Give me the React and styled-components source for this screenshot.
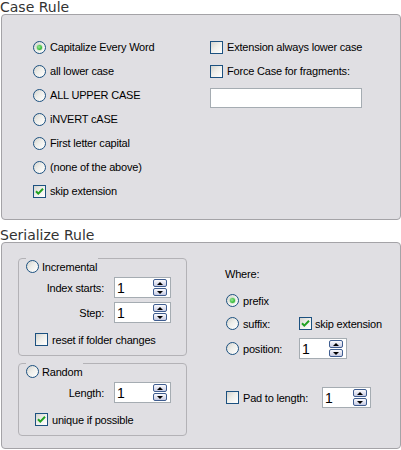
import React from "react";
import styled, { createGlobalStyle, css } from "styled-components";

const PANEL_BG = "#e0dfe3";

const GlobalStyle = createGlobalStyle`
  html, body { margin: 0; padding: 0; background: #fff; }
  body {
    font-family: "Liberation Sans", Arial, sans-serif;
    font-size: 11px;
    color: #000;
    letter-spacing: -0.2px;
  }
`;

const Page = styled.div`
  width: 401px;
`;

const SectionTitle = styled.div`
  font-family: "DejaVu Sans", Verdana, sans-serif;
  font-size: 14px;
  line-height: 14px;
  height: 14px;
  color: #333;
  letter-spacing: 0;
  margin-top: ${(p) => p.$gap || 0}px;
`;

const Panel = styled.div`
  box-sizing: border-box;
  margin-left: 1px;
  width: 400px;
  height: ${(p) => p.$h}px;
  background: ${PANEL_BG};
  border: 1px solid #a4a3a7;
  border-radius: 4px;
  padding: ${(p) => p.$pad};
`;

const CaseGrid = styled.div`
  display: grid;
  grid-template-columns: 177px 1fr;
`;

const Column = styled.div`
  display: flex;
  flex-direction: column;
`;

const OptionRow = styled.label`
  display: flex;
  align-items: center;
  gap: ${(p) => p.$gap ?? 4}px;
  height: ${(p) => p.$h || 24}px;
  margin-left: ${(p) => p.$indent || 0}px;
  white-space: nowrap;
`;

const markBase = css`
  box-sizing: border-box;
  flex: none;
  width: 13px;
  height: 13px;
  border: 1px solid #1c5180;
  background: linear-gradient(135deg, #d4d3ce 0%, #eeeeea 45%, #ffffff 100%);
  display: flex;
  align-items: center;
  justify-content: center;
`;

const Radio = styled.span`
  ${markBase}
  border-radius: 50%;
  &::after {
    content: "";
    display: ${(p) => (p.$checked ? "block" : "none")};
    width: 5px;
    height: 5px;
    border-radius: 50%;
    background: radial-gradient(circle at 40% 40%, #9ae89a 0%, #3fbf3f 55%, #21a121 100%);
    box-shadow: 0 0 1px 0.5px rgba(60, 190, 60, 0.45);
  }
`;

const Box = styled.span`
  ${markBase}
  border-radius: 0;
`;

const Check = ({ checked }) => (
  <Box>
    {checked && (
      <svg width="11" height="11" viewBox="0 0 11 11">
        <path d="M2 5.2 L4.3 7.6 L9 2.8" fill="none" stroke="#21a121" strokeWidth="2" />
      </svg>
    )}
  </Box>
);

const TextBox = styled.div`
  box-sizing: border-box;
  width: 152px;
  height: 20px;
  margin-top: 5px;
  background: #fff;
  border: 1px solid #a5acb2;
`;

const SpinBox = styled.div`
  box-sizing: border-box;
  width: ${(p) => p.$w}px;
  height: 21px;
  background: #fff;
  border: 1px solid #a5acb2;
  display: flex;
  align-items: center;
  justify-content: space-between;
  padding: 0 3px 0 2px;
  font-size: 14px;
  letter-spacing: 0;
`;

const SpinButtons = styled.div`
  display: flex;
  flex-direction: column;
  gap: 1px;
`;

const SpinArrow = styled.span`
  box-sizing: border-box;
  width: 14px;
  height: 8px;
  border: 1px solid #3f5d90;
  border-radius: 2px;
  background: linear-gradient(#fbfbfe, #c7cbe3);
  display: flex;
  align-items: center;
  justify-content: center;
  &::after {
    content: "";
    width: 0;
    height: 0;
    border-left: 3px solid transparent;
    border-right: 3px solid transparent;
    ${(p) =>
      p.$dir === "up"
        ? "border-bottom: 3px solid #000;"
        : "border-top: 3px solid #000;"}
  }
`;

const Spin = ({ w, value = "1" }) => (
  <SpinBox $w={w}>
    <span>{value}</span>
    <SpinButtons>
      <SpinArrow $dir="up" />
      <SpinArrow $dir="down" />
    </SpinButtons>
  </SpinBox>
);

const SerialGrid = styled.div`
  display: grid;
  grid-template-columns: 169px 1fr;
  column-gap: 38px;
`;

const Groups = styled.div`
  display: flex;
  flex-direction: column;
  gap: 7px;
`;

const GroupBox = styled.div`
  position: relative;
  box-sizing: border-box;
  border: 1px solid #b3b2b6;
  border-radius: 4px;
  padding: 18px 0 9px 0;
`;

const GroupLegend = styled.label`
  position: absolute;
  top: -1px;
  left: 7px;
  height: 17px;
  display: flex;
  align-items: center;
  gap: 3px;
  padding-right: 1px;
  background: ${PANEL_BG};
  white-space: nowrap;
`;

const FieldGrid = styled.div`
  display: grid;
  grid-template-columns: 85px 57px;
  column-gap: 10px;
  row-gap: 4px;
  align-items: center;
`;

const FieldLabel = styled.span`
  text-align: right;
  white-space: nowrap;
`;

const GroupCheck = styled.label`
  display: flex;
  align-items: center;
  gap: 4px;
  height: 13px;
  margin: 10px 0 0 16px;
  white-space: nowrap;
`;

const WhereColumn = styled.div`
  padding-top: 9px;
`;

const WhereLabel = styled.div`
  height: 14px;
  line-height: 14px;
`;

const WhereGrid = styled.div`
  display: grid;
  grid-template-columns: 74px auto;
  grid-template-rows: 17px 17px 21px;
  row-gap: 6px;
  margin-top: 11px;
  align-items: center;
`;

const PadRow = styled.div`
  display: grid;
  grid-template-columns: 97px 49px;
  align-items: center;
  height: 21px;
  margin-top: 28px;
`;

const Empty = styled.span``;

export default function App() {
  const caseOptions = [
    ["Capitalize Every Word", true],
    ["all lower case", false],
    ["ALL UPPER CASE", false],
    ["iNVERT cASE", false],
    ["First letter capital", false],
    ["(none of the above)", false],
  ];
  return (
    <Page>
      <GlobalStyle />
      <SectionTitle>Case Rule</SectionTitle>
      <Panel $h={206} $pad="20px 0 0 31px">
        <CaseGrid>
          <Column>
            {caseOptions.map(([label, checked]) => (
              <OptionRow key={label}>
                <Radio $checked={checked} />
                {label}
              </OptionRow>
            ))}
            <OptionRow>
              <Check checked />
              skip extension
            </OptionRow>
          </Column>
          <Column>
            <OptionRow $gap={4}>
              <Check />
              Extension always lower case
            </OptionRow>
            <OptionRow $gap={4}>
              <Check />
              Force Case for fragments:
            </OptionRow>
            <TextBox />
          </Column>
        </CaseGrid>
      </Panel>

      <SectionTitle $gap={8}>Serialize Rule</SectionTitle>
      <Panel $h={207} $pad="15px 0 0 16px">
        <SerialGrid>
          <Groups>
            <GroupBox>
              <GroupLegend>
                <Radio />
                Incremental
              </GroupLegend>
              <FieldGrid>
                <FieldLabel>Index starts:</FieldLabel>
                <Spin w={57} />
                <FieldLabel>Step:</FieldLabel>
                <Spin w={57} />
              </FieldGrid>
              <GroupCheck>
                <Check />
                reset if folder changes
              </GroupCheck>
            </GroupBox>
            <GroupBox>
              <GroupLegend>
                <Radio />
                Random
              </GroupLegend>
              <FieldGrid>
                <FieldLabel>Length:</FieldLabel>
                <Spin w={57} />
              </FieldGrid>
              <GroupCheck>
                <Check checked />
                unique if possible
              </GroupCheck>
            </GroupBox>
          </Groups>

          <WhereColumn>
            <WhereLabel>Where:</WhereLabel>
            <WhereGrid>
              <OptionRow $h={17} $indent={1}>
                <Radio $checked />
                prefix
              </OptionRow>
              <Empty />
              <OptionRow $h={17} $indent={1}>
                <Radio />
                suffix:
              </OptionRow>
              <OptionRow $h={17} $gap={3}>
                <Check checked />
                skip extension
              </OptionRow>
              <OptionRow $h={21} $indent={1}>
                <Radio />
                position:
              </OptionRow>
              <Spin w={48} />
            </WhereGrid>
            <PadRow>
              <OptionRow $h={21} $indent={1}>
                <Check />
                Pad to length:
              </OptionRow>
              <Spin w={49} />
            </PadRow>
          </WhereColumn>
        </SerialGrid>
      </Panel>
    </Page>
  );
}
